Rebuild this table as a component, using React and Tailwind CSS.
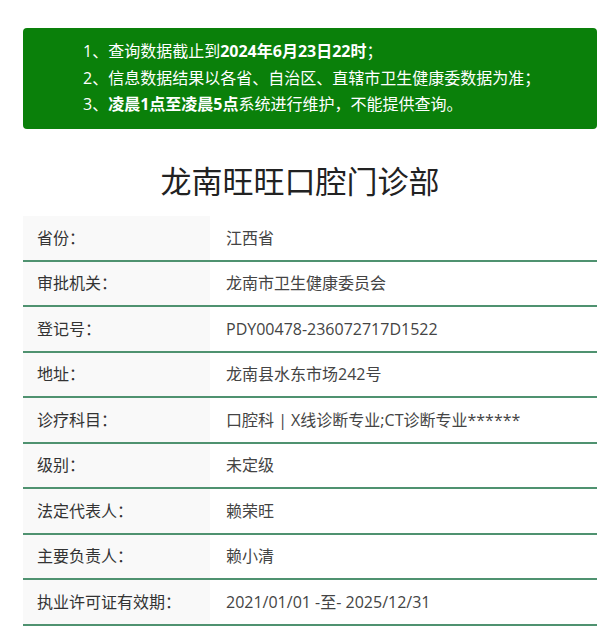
import React from 'react';

const rows = [
  ['省份：', '江西省'],
  ['审批机关：', '龙南市卫生健康委员会'],
  ['登记号：', 'PDY00478-236072717D1522'],
  ['地址：', '龙南县水东市场242号'],
  ['诊疗科目：', '口腔科 | X线诊断专业;CT诊断专业******'],
  ['级别：', '未定级'],
  ['法定代表人：', '赖荣旺'],
  ['主要负责人：', '赖小清'],
  ['执业许可证有效期：', '2021/01/01 -至- 2025/12/31'],
];

export default function App() {
  return (
    <div
      className="w-[600px] h-[626px] overflow-hidden bg-white pl-[23px] pr-[3px] pt-[28px]"
      style={{ fontFamily: '"Open Sans", "Noto Sans CJK SC", sans-serif' }}
    >
      {/* Notice */}
      <div className="bg-[#0a800a] rounded-[4px] h-[101px] pl-[60px] pt-[10px] text-white text-[16px] leading-[26.5px]">
        <p>1、查询数据截止到<b>2024年6月23日22时</b>；</p>
        <p>2、信息数据结果以各省、自治区、直辖市卫生健康委数据为准；</p>
        <p>3、<b>凌晨1点至凌晨5点</b>系统进行维护，不能提供查询。</p>
      </div>

      {/* Title */}
      <h1 className="text-center pr-[20px] mt-[30px] text-[31px] leading-[44px] text-[#222]">
        龙南旺旺口腔门诊部
      </h1>

      {/* Table */}
      <div className="mt-[13px]">
        {rows.map(([k, v]) => (
          <div key={k} className="flex h-[45.5px] border-b-2 border-[#4f9270]">
            <div className="w-[187px] shrink-0 bg-[#f9f9f9] flex items-center pl-[14px] text-[16px] text-[#333]">
              {k}
            </div>
            <div className="flex-1 flex items-center pl-[16px] text-[16px] text-[#444]">
              {v}
            </div>
          </div>
        ))}
      </div>
    </div>
  );
}
